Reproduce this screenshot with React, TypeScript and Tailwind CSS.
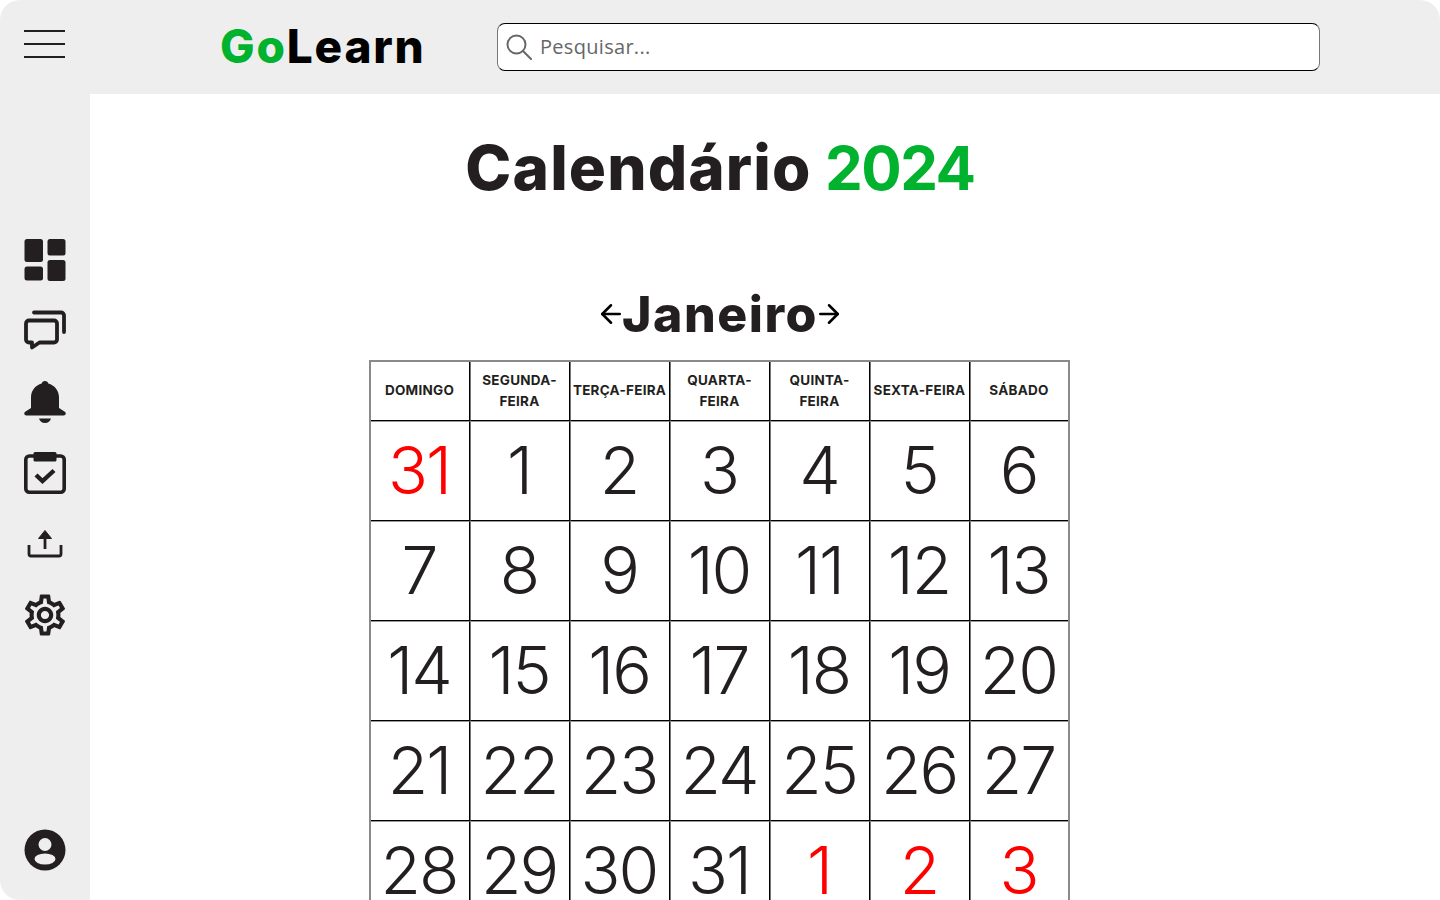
import React from "react";
import { ArrowLeft, ArrowRight } from "lucide-react";

const headers = ["DOMINGO", "SEGUNDA-\nFEIRA", "TERÇA-FEIRA", "QUARTA-\nFEIRA", "QUINTA-\nFEIRA", "SEXTA-FEIRA", "SÁBADO"];

const days = [
  { n: "31", off: true }, { n: "1" }, { n: "2" }, { n: "3" }, { n: "4" }, { n: "5" }, { n: "6" },
  { n: "7" }, { n: "8" }, { n: "9" }, { n: "10" }, { n: "11" }, { n: "12" }, { n: "13" },
  { n: "14" }, { n: "15" }, { n: "16" }, { n: "17" }, { n: "18" }, { n: "19" }, { n: "20" },
  { n: "21" }, { n: "22" }, { n: "23" }, { n: "24" }, { n: "25" }, { n: "26" }, { n: "27" },
  { n: "28" }, { n: "29" }, { n: "30" }, { n: "31" }, { n: "1", off: true }, { n: "2", off: true }, { n: "3", off: true },
];

const DashIcon = () => (
  <svg width="42" height="42" viewBox="0 0 42 42" fill="#231f20">
    <rect x="0.500" y="0" width="18.500" height="23" rx="2.500" />
    <rect x="23.500" y="0" width="18" height="16.500" rx="2.500" />
    <rect x="0.500" y="27.500" width="18.500" height="14" rx="2.500" />
    <rect x="23.500" y="21" width="18" height="21" rx="2.500" />
  </svg>
);

const ChatIcon = () => (
  <svg width="42" height="42" viewBox="0 0 42 42" fill="none" stroke="#231f20" strokeWidth="3.800">
    <path d="M10 2.500h27a3 3 0 0 1 3 3V22" strokeLinecap="round" />
    <path d="M5 10.500h25a3 3 0 0 1 3 3v16a3 3 0 0 1-3 3H15.500L8 37.500v-5H5a3 3 0 0 1-3-3v-16a3 3 0 0 1 3-3z" strokeLinejoin="round" />
  </svg>
);

const BellIcon = () => (
  <svg width="42" height="42" viewBox="0 0 42 42" fill="#231f20">
    <path d="M21 0c1.800 0 3 1.100 3.300 2.600C30.500 4.200 35 9.700 35 16.500V27l5.800 3.800c1.700 1.200 1 3.700-1.100 3.700H2.300C.2 34.500-.5 32 1.200 30.800L7 27V16.500C7 9.700 11.500 4.200 17.700 2.600 18 1.100 19.200 0 21 0z" />
    <path d="M15 37.500h12c-.6 2.600-3 4.500-6 4.500s-5.400-1.900-6-4.500z" />
  </svg>
);

const TaskIcon = () => (
  <svg width="42" height="42" viewBox="0 0 42 42" fill="none">
    <rect x="1.800" y="4" width="38.400" height="36.200" rx="3.500" stroke="#231f20" strokeWidth="3.600" />
    <rect x="9.500" y="0" width="23" height="9.500" rx="1.500" fill="#231f20" />
    <path d="M12 23l6.500 6 11.500-10.500" stroke="#231f20" strokeWidth="4.400" />
  </svg>
);

const UploadIcon = () => (
  <svg width="42" height="42" viewBox="0 0 42 42" fill="none" stroke="#231f20" strokeWidth="2.800">
    <path d="M21 26V12" />
    <path d="M21 7.500l-6.500 8h13z" fill="#231f20" strokeWidth="1" />
    <path d="M5 22v9a2 2 0 0 0 2 2h28a2 2 0 0 0 2-2v-9" />
  </svg>
);

const GearIcon = () => (
  <svg width="42" height="42" viewBox="1.800 1.800 20.400 20.400" fill="#231f20">
    <path d="M19.430 12.980c.040-.320.070-.640.070-.980s-.030-.660-.070-.980l2.110-1.650c.190-.150.240-.420.120-.640l-2-3.460c-.120-.220-.390-.300-.610-.220l-2.490 1c-.520-.400-1.080-.730-1.690-.980l-.380-2.650C14.460 2.180 14.250 2 14 2h-4c-.250 0-.460.180-.490.420l-.380 2.650c-.610.250-1.170.590-1.690.980l-2.490-1c-.230-.090-.490 0-.610.220l-2 3.460c-.130.220-.070.490.120.640l2.110 1.650c-.040.320-.070.650-.070.980s.030.660.070.980l-2.110 1.650c-.190.150-.240.420-.120.640l2 3.460c.120.220.390.300.610.220l2.490-1c.520.400 1.080.730 1.690.980l.380 2.650c.030.240.240.420.490.420h4c.250 0 .460-.180.490-.420l.380-2.650c.610-.250 1.170-.590 1.690-.980l2.490 1c.230.090.490 0 .610-.220l2-3.460c.120-.220.070-.490-.120-.640l-2.110-1.650zM17.450 11.270c.040.310.050.520.050.730s-.020.430-.050.730l-.140 1.130.890.700 1.080.840-.700 1.210-1.270-.510-1.040-.420-.900.680c-.430.320-.840.560-1.250.730l-1.060.430-.160 1.130-.200 1.350h-1.400l-.190-1.350-.160-1.130-1.060-.430c-.430-.180-.830-.410-1.230-.710l-.910-.700-1.060.430-1.270.510-.700-1.210 1.080-.840.890-.700-.140-1.130c-.030-.310-.050-.540-.050-.740s.020-.430.050-.730l.140-1.130-.890-.700-1.080-.840.700-1.210 1.270.510 1.040.420.900-.680c.430-.320.840-.560 1.250-.730l1.060-.430.160-1.130.200-1.350h1.390l.190 1.350.160 1.130 1.060.430c.430.180.830.410 1.230.710l.910.700 1.060-.430 1.270-.510.700 1.210-1.070.850-.890.700.140 1.130zM12 8c-2.210 0-4 1.790-4 4s1.790 4 4 4 4-1.790 4-4-1.790-4-4-4zm0 6c-1.100 0-2-.900-2-2s.900-2 2-2 2 .900 2 2-.900 2-2 2z" />
  </svg>
);

const UserIcon = () => (
  <svg width="42" height="42" viewBox="0 0 42 42">
    <circle cx="21" cy="21" r="20.500" fill="#231f20" />
    <circle cx="21" cy="15.500" r="6.500" fill="#eeeeee" />
    <ellipse cx="21" cy="30" rx="10.500" ry="5.500" fill="#eeeeee" />
  </svg>
);

const SearchIcon = () => (
  <svg width="26" height="26" viewBox="0 0 26 26" fill="none" stroke="#666666" strokeWidth="2">
    <circle cx="10.500" cy="10.500" r="9" />
    <path d="M17 17l8 8" strokeLinecap="round" />
  </svg>
);

export default function App() {
  return (
    <div className="h-[900px] overflow-hidden bg-white font-['Inter',sans-serif]">
      <header className="flex h-[94px] items-center rounded-t-[20px] bg-[#eeeeee]">
        <button className="-mt-[6px] ml-6 flex h-[28px] w-[41px] flex-col justify-between">
          <span className="h-[2px] bg-[#231f20]" />
          <span className="h-[2px] bg-[#231f20]" />
          <span className="h-[2px] bg-[#231f20]" />
        </button>
        <div className="-mt-[2px] ml-[155px] w-[277px] text-[46px] leading-none font-extrabold tracking-[1.800px] text-black">
          <span className="text-[#00b22d]">Go</span>Learn
        </div>
        <div className="flex h-12 w-[823px] items-center rounded-lg border border-x-[#777777] border-y-black bg-white pl-2">
          <SearchIcon />
          <span className="ml-[8px] font-['Open_Sans',sans-serif] text-[20px] tracking-[0.300px] text-[#666666]">Pesquisar...</span>
        </div>
      </header>
      <div className="flex h-[806px]">
        <aside className="flex w-[90px] shrink-0 flex-col items-center justify-between rounded-bl-[20px] bg-[#eeeeee] pt-[145px] pb-[29px]">
          <div className="flex flex-col gap-[29px]">
            <DashIcon />
            <ChatIcon />
            <BellIcon />
            <TaskIcon />
            <UploadIcon />
            <GearIcon />
          </div>
          <UserIcon />
        </aside>
        <main className="flex flex-1 flex-col items-center pr-[90px]">
          <h1 className="mt-[35px] h-[78px] shrink-0 text-[62px] leading-[78px] font-extrabold text-[#231f20]">
            <span className="tracking-[1.100px]">Calendário</span>{" "}
            <span className="text-[60px] font-bold tracking-[-1.500px] text-[#00b22d]">2024</span>
          </h1>
          <div className="mt-[71px] mb-[10px] flex h-[72px] shrink-0 items-center">
            <ArrowLeft size={30} strokeWidth={2} className="-mr-[4px] text-black" />
            <span className="text-[50px] leading-none font-extrabold tracking-[1.500px] text-[#231f20]">Janeiro</span>
            <ArrowRight size={30} strokeWidth={2} className="-ml-[4px] text-black" />
          </div>
          <div className="mr-[2px] grid w-[701px] shrink-0 grid-cols-[99px_100px_100px_100px_100px_100px_98px] border-2 border-b-0 border-[#8a8a8a]">
            {headers.map((h, i) => (
              <div
                key={h}
                className={`flex h-[59px] items-center justify-center border-b border-b-black pb-px text-center text-[13.500px] leading-[21px] font-bold tracking-[0.250px] whitespace-pre-line text-[#231f20] ${
                  i === 6 ? "" : "border-r border-r-black"
                } ${i === 0 ? "" : "border-l border-l-[#777777]"}`}
              >
                {h}
              </div>
            ))}
            {days.map((d, i) => (
              <div
                key={i}
                className={`flex h-[100px] items-center justify-center border-t border-b border-t-[#9a9a9a] border-b-black pr-px pb-[2px] text-[66px] leading-none font-light tracking-[-2px] ${
                  i % 7 === 6 ? "" : "border-r border-r-black"
                } ${i % 7 === 0 ? "" : "border-l border-l-[#777777]"} ${d.off ? "text-[#ff0000]" : "text-[#231f20]"}`}
              >
                {d.n}
              </div>
            ))}
          </div>
        </main>
      </div>
    </div>
  );
}
